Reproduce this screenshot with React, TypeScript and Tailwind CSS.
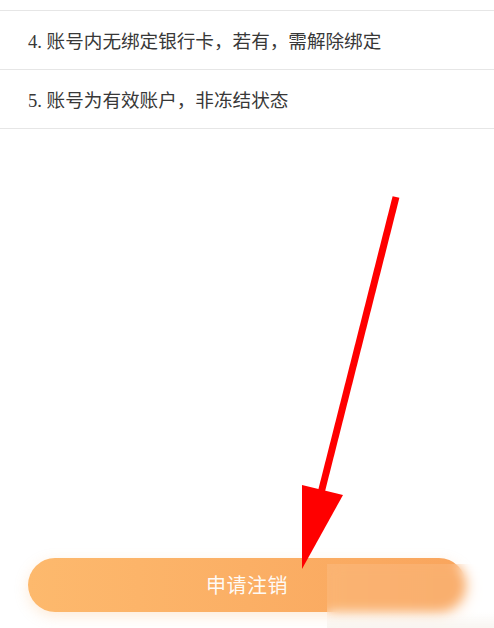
import React from "react";

export default function App() {
  const rows = ["4. 账号内无绑定银行卡，若有，需解除绑定", "5. 账号为有效账户，非冻结状态"];
  return (
    <div className="relative w-[494px] h-[628px] bg-white overflow-hidden">
      <div className="flex flex-col">
        <div className="h-[11px] border-b border-[#e6e6e6]" />
        {rows.map((r) => (
          <div
            key={r}
            className="h-[59px] border-b border-[#e6e6e6] flex items-center pl-[28px] pt-[4px]"
          >
            <span className="text-[18.6px] text-[#383838] font-['Liberation_Serif','Noto_Sans_CJK_SC',sans-serif]">
              {r}
            </span>
          </div>
        ))}
      </div>

      <div className="absolute left-[28px] right-[28px] top-[558px] h-[54px] rounded-full bg-gradient-to-r from-[#fdb96d] to-[#f9a55d] shadow-[0_4px_14px_rgba(252,176,100,0.25)] flex items-center justify-center">
        <span className="text-white/95 text-[20px] font-['Noto_Sans_CJK_SC',sans-serif] tracking-[0.5px]">
          申请注销
        </span>
      </div>

      <svg className="absolute left-0 top-0" width="494" height="628" viewBox="0 0 494 628">
        <line x1="396" y1="197" x2="320" y2="497" stroke="#ff0000" strokeWidth="7" />
        <polygon points="302,485 343,495 302,569" fill="#ff0000" />
      </svg>

      <div className="absolute left-[327px] top-[564px] w-[167px] h-[64px] backdrop-blur-[6px] bg-white/10" />
      <div className="absolute left-[327px] top-[612px] w-[167px] h-[16px] bg-gradient-to-b from-white/0 to-[#f4efe9]/60" />
    </div>
  );
}
